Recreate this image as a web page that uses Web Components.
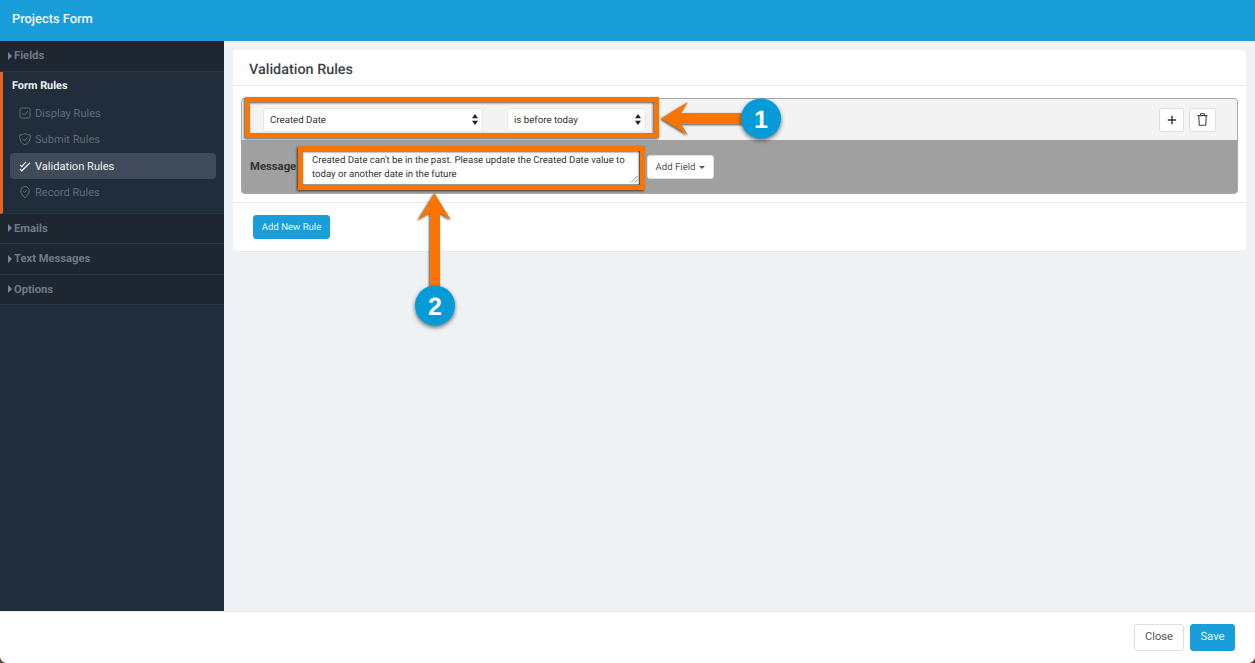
<!DOCTYPE html>
<html>
<head>
<meta charset="utf-8">
<title>Projects Form</title>
<style>
    html, body { margin: 0; height: 100%; overflow: hidden; }
    body { font-family: Roboto, "Liberation Sans", sans-serif; text-rendering: geometricPrecision; }
</style>
</head>
<body>
<form-shell>
    <span slot="title">Projects Form</span>
    <side-nav slot="nav">
        <nav-header>Fields</nav-header>
        <nav-group label="Form Rules">
            <nav-item icon="check-box">Display Rules</nav-item>
            <nav-item icon="shield">Submit Rules</nav-item>
            <nav-item icon="double-check" active>Validation Rules</nav-item>
            <nav-item icon="pin">Record Rules</nav-item>
        </nav-group>
        <nav-header>Emails</nav-header>
        <nav-header>Text Messages</nav-header>
        <nav-header>Options</nav-header>
    </side-nav>
    <rules-card slot="main" heading="Validation Rules">
        <rule-row>
            <fake-select slot="left" style="width:220px">Created Date</fake-select>
            <fake-select slot="left" style="width:139px;margin-left:24px">is before today</fake-select>
            <ui-button slot="actions" style="width:25px">
                <svg width="10" height="10" viewBox="0 0 10 10"><path d="M5 .8v8.4M.8 5h8.4" stroke="#333" stroke-width="1.4" fill="none"/></svg>
            </ui-button>
            <ui-button slot="actions" style="width:27px">
                <svg width="11" height="13" viewBox="0 0 11 13" fill="none" stroke="#444" stroke-width="1.1"><path d="M.5 2.6h10M3.6 2.4V.7h3.800v1.700M1.700 2.800l.6 9.500h6.400l.6-9.500"/></svg>
            </ui-button>
            <span slot="label">Message</span>
            <span slot="message">Created Date can't be in the past. Please update the Created Date value to today or another date in the future</span>
            <ui-button slot="field" style="width:67px;height:24px;padding-top:2px">Add Field<i style="display:inline-block;margin-left:4px;vertical-align:2px;border:3px solid transparent;border-top-color:#555;border-bottom:0"></i></ui-button>
        </rule-row>
        <ui-button slot="footer" variant="primary" style="width:77px;height:24px">Add New Rule</ui-button>
    </rules-card>
    <ui-button slot="bottom" style="width:50px;height:27px;font-size:11.1px;padding-bottom:2px">Close</ui-button>
    <ui-button slot="bottom" variant="primary" style="width:45px;height:27px;font-size:11.3px;padding-bottom:2px">Save</ui-button>
    <callout-layer slot="overlay"></callout-layer>
</form-shell>

<script>
class FormShell extends HTMLElement {
    constructor() {
        super();
        this.attachShadow({ mode: 'open' });
        this.shadowRoot.innerHTML = `
            <style>
                :host {
                    display: grid;
                    grid-template-columns: 224px 1fr;
                    grid-template-rows: 41px 1fr 52px;
                    width: 1255px;
                    height: 663px;
                    position: relative;
                    overflow: hidden;
                    background: #eef2f5;
                }
                .top {
                    grid-column: 1 / 3;
                    background: #199ed9;
                    color: #f2f9fd;
                    font-size: 12.85px;
                    font-weight: 500;
                    line-height: 39px;
                    padding-left: 12px;
                }
                .main { padding: 9px 9px 0; }
                .bottom {
                    grid-column: 1 / 3;
                    background: #fff;
                    border-top: 1px solid #e4e7eb;
                    display: flex;
                    justify-content: flex-end;
                    align-items: flex-start;
                    gap: 6px;
                    padding: 12px 20px 0 0;
                }
            </style>
            <div class="top"><slot name="title"></slot></div>
            <slot name="nav"></slot>
            <div class="main"><slot name="main"></slot></div>
            <div class="bottom"><slot name="bottom"></slot></div>
            <slot name="overlay"></slot>
        `;
    }
}

class SideNav extends HTMLElement {
    constructor() {
        super();
        this.attachShadow({ mode: 'open' });
        this.shadowRoot.innerHTML = `
            <style>
                :host {
                    display: block;
                    background: #212d3b;
                    overflow: hidden;
                }
            </style>
            <slot></slot>
        `;
    }
}

class NavHeader extends HTMLElement {
    constructor() {
        super();
        this.attachShadow({ mode: 'open' });
        this.shadowRoot.innerHTML = `
            <style>
                :host {
                    display: flex;
                    align-items: center;
                    height: 29.500px;
                    background: #1e2631;
                    border-bottom: 1px solid #2a3542;
                    color: #6f7a87;
                    font-size: 11.2px;
                    font-weight: 700;
                    padding-left: 8px;
                }
                i {
                    border: 4px solid transparent;
                    border-left: 4px solid #7d8792;
                    border-right: 0;
                    margin-right: 2px;
                }
            </style>
            <i></i><span><slot></slot></span>
        `;
    }
}

class NavGroup extends HTMLElement {
    constructor() {
        super();
        this.attachShadow({ mode: 'open' });
        this.shadowRoot.innerHTML = `
            <style>
                :host {
                    display: block;
                    height: 142px;
                    box-sizing: border-box;
                    border-left: 3px solid #e8641e;
                    border-bottom: 1px solid #2a3542;
                    padding: 0 8px 0 7px;
                }
                .label {
                    color: #f1f3f5;
                    font-size: 10.9px;
                    font-weight: 700;
                    height: 29px;
                    line-height: 28px;
                    padding-left: 2px;
                }
                .items {
                    display: flex;
                    flex-direction: column;
                }
            </style>
            <div class="label"></div>
            <div class="items"><slot></slot></div>
        `;
    }
    connectedCallback() {
        this.shadowRoot.querySelector('.label').textContent = this.getAttribute('label');
    }
}

const NAV_ICONS = {
    'check-box': '<rect x="2" y="2" width="10" height="10" rx="1.5"/><path d="M4.400 7l2 2 3.400-4"/>',
    'shield': '<path d="M7 1.400c1.600 1.100 3.400 1.600 5.400 1.700.1 4.800-1.600 8.200-5.400 9.800C3.200 11.300 1.500 7.900 1.600 3.100 3.600 3 5.400 2.500 7 1.400z"/><path d="M4.600 7l1.800 1.800 3-3.300"/>',
    'double-check': '<path d="M2 5.800l1.800 1.800L8 2.800M2 10l1.800 1.800L12 3.800" stroke-width="1.200"/>',
    'pin': '<path d="M7 13c-2.800-3-4.200-5.300-4.200-7.300a4.200 4.200 0 0 1 8.400 0C11.200 7.700 9.800 10 7 13z"/><path d="M5.200 6l1.400 1.400 2.200-2.400"/>'
};

class NavItem extends HTMLElement {
    constructor() {
        super();
        this.attachShadow({ mode: 'open' });
        this.shadowRoot.innerHTML = `
            <style>
                :host {
                    display: flex;
                    align-items: center;
                    height: 26.300px;
                    box-sizing: border-box;
                    padding-left: 8px;
                    gap: 3px;
                    border-radius: 4px;
                    color: #5f6b79;
                    font-size: 11.1px;
                }
                :host([active]) {
                    background: #3f4a5a;
                    color: #f1f3f5;
                }
                :host(:not([active])) { padding-bottom: 1px; }
                svg { width: 14px; height: 14px; fill: none; stroke: currentColor; stroke-width: 1; flex: none; }
            </style>
            <svg viewBox="0 0 14 14"></svg><slot></slot>
        `;
    }
    connectedCallback() {
        this.shadowRoot.querySelector('svg').innerHTML = NAV_ICONS[this.getAttribute('icon')];
    }
}

class RulesCard extends HTMLElement {
    constructor() {
        super();
        this.attachShadow({ mode: 'open' });
        this.shadowRoot.innerHTML = `
            <style>
                :host {
                    display: block;
                    background: #fff;
                    border-radius: 4px;
                    height: 202px;
                    box-sizing: border-box;
                    border-bottom: 1px solid #e6e9ed;
                }
                h2 {
                    margin: 0;
                    height: 36px;
                    box-sizing: border-box;
                    border-bottom: 1px solid #e8ebef;
                    color: #3c4249;
                    font-size: 14.4px;
                    font-weight: 500;
                    line-height: 39px;
                    padding-left: 16px;
                }
                .body {
                    padding: 12px 8px 8px;
                    border-bottom: 1px solid #e8ebef;
                    height: 117px;
                    box-sizing: border-box;
                }
                .foot { padding: 12px 20px; display: flex; }
            </style>
            <h2></h2>
            <div class="body"><slot></slot></div>
            <div class="foot"><slot name="footer"></slot></div>
        `;
    }
    connectedCallback() {
        this.shadowRoot.querySelector('h2').textContent = this.getAttribute('heading');
    }
}

class RuleRow extends HTMLElement {
    constructor() {
        super();
        this.attachShadow({ mode: 'open' });
        this.shadowRoot.innerHTML = `
            <style>
                :host {
                    display: block;
                    height: 96px;
                    box-sizing: border-box;
                    border: 1px solid #a8a8a8;
                    border-radius: 4px;
                    overflow: hidden;
                    background: #a0a0a0;
                }
                .top {
                    height: 41px;
                    box-sizing: border-box;
                    background: #f3f3f3;
                    display: flex;
                    align-items: center;
                    justify-content: space-between;
                    padding: 0 21px 0 21px;
                }
                .group { display: flex; align-items: center; }
                .actions { gap: 5px; }
                .bottom {
                    height: 53px;
                    display: flex;
                    align-items: center;
                    padding-left: 8px;
                }
                .label {
                    width: 53px;
                    color: #333;
                    font-size: 11.3px;
                    font-weight: 700;
                    flex: none;
                }
                .text {
                    position: relative;
                    width: 336px;
                    height: 34px;
                    box-sizing: border-box;
                    background: #fff;
                    color: #333;
                    font-size: 9.600px;
                    line-height: 14px;
                    padding: 4px 9px 0;
                    margin-right: 8px;
                    flex: none;
                }
                .grip {
                    position: absolute;
                    right: 1px;
                    bottom: 1px;
                    width: 8px;
                    height: 8px;
                }
            </style>
            <div class="top">
                <div class="group"><slot name="left"></slot></div>
                <div class="group actions"><slot name="actions"></slot></div>
            </div>
            <div class="bottom">
                <div class="label"><slot name="label"></slot></div>
                <div class="text">
                    <slot name="message"></slot>
                    <svg class="grip" viewBox="0 0 8 8"><path d="M1 7.500L7.500 1M4.500 7.500L7.500 4.500" stroke="#777" stroke-width=".8"/></svg>
                </div>
                <slot name="field"></slot>
            </div>
        `;
    }
}

class FakeSelect extends HTMLElement {
    constructor() {
        super();
        this.attachShadow({ mode: 'open' });
        this.shadowRoot.innerHTML = `
            <style>
                :host {
                    display: flex;
                    align-items: center;
                    justify-content: space-between;
                    height: 24px;
                    box-sizing: border-box;
                    background: #fff;
                    border: 1px solid #e4e7eb;
                    border-radius: 4px;
                    color: #333;
                    font-size: 9.700px;
                    padding: 0 4px 0 6px;
                }
                span { padding-top: 2px; }
            </style>
            <span><slot></slot></span>
            <svg width="6" height="11" viewBox="0 0 6 11"><path d="M3 0l3 4.300H0zM3 11L0 6.700h6z" fill="#222"/></svg>
        `;
    }
}

class UiButton extends HTMLElement {
    constructor() {
        super();
        this.attachShadow({ mode: 'open' });
        this.shadowRoot.innerHTML = `
            <style>
                :host {
                    display: inline-flex;
                    align-items: center;
                    justify-content: center;
                    height: 24px;
                    box-sizing: border-box;
                    background: #fff;
                    border: 1px solid #dcdfe3;
                    border-radius: 3px;
                    color: #555;
                    font-size: 9.600px;
                    white-space: nowrap;
                }
                :host([variant="primary"]) {
                    background: #199ed9;
                    border-color: #199ed9;
                    color: #e4f4fc;
                }
            </style>
            <slot></slot>
        `;
    }
}

// the orange annotations lie over the page at their own coordinates
class CalloutLayer extends HTMLElement {
    constructor() {
        super();
        this.attachShadow({ mode: 'open' });
        this.shadowRoot.innerHTML = `
            <style>
                :host { position: absolute; left: 0; top: 0; width: 1255px; height: 663px; pointer-events: none; }
                svg { display: block; }
                .mark { filter: drop-shadow(-.5px 1.5px 1px rgba(0,0,0,.65)); }
                .badge { filter: drop-shadow(0 2px 2px rgba(0,0,0,.55)); }
                text { font: 700 25px "Liberation Sans", sans-serif; fill: #fff; text-anchor: middle; }
            </style>
            <svg width="1255" height="663" viewBox="0 0 1255 663">
                <g class="mark" fill="none" stroke="#fb7400" stroke-width="5">
                    <rect x="247.500" y="99.500" width="409" height="36"/>
                    <rect x="300.500" y="148.500" width="342" height="39"/>
                </g>
                <g class="mark" fill="#fb7400">
                    <path d="M661 118.500L688 102l-7 11h64v11h-64l7 11z"/>
                    <path d="M434.500 193L451 220l-11-7v90h-10v-90l-12 7z"/>
                </g>
                <g class="badge" fill="#059bd8">
                    <circle cx="761" cy="118.500" r="20"/>
                    <circle cx="435" cy="305.500" r="20"/>
                </g>
                <text x="761" y="128">1</text>
                <text x="435" y="315">2</text>
                <path d="M0 657c.5 3 2.500 5.500 6 6H0zM1255 657c-.5 3-2.500 5.500-6 6h6z" fill="#5a4636"/>
            </svg>
        `;
    }
}

customElements.define('form-shell', FormShell);
customElements.define('side-nav', SideNav);
customElements.define('nav-header', NavHeader);
customElements.define('nav-group', NavGroup);
customElements.define('nav-item', NavItem);
customElements.define('rules-card', RulesCard);
customElements.define('rule-row', RuleRow);
customElements.define('fake-select', FakeSelect);
customElements.define('ui-button', UiButton);
customElements.define('callout-layer', CalloutLayer);
</script>
</body>
</html>
